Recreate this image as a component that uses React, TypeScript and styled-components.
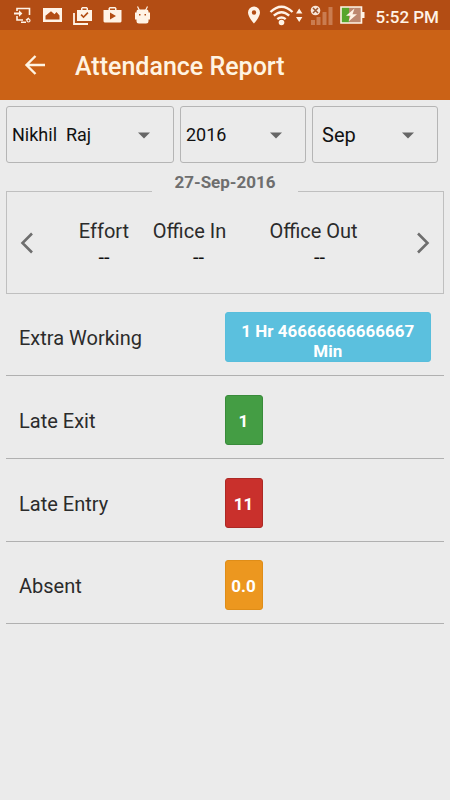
import React from "react";
import styled, { createGlobalStyle } from "styled-components";

const GlobalStyle = createGlobalStyle`
  *, *::before, *::after { box-sizing: border-box; }
  html, body, #root { min-height: 100vh; }
  body {
    margin: 0;
    background: #ebebeb;
    color: #2b2b2b;
    font-family: Roboto, "Liberation Sans", sans-serif;
    font-size: 20px;
  }
`;

const StatusBar = styled.div`
  display: flex;
  align-items: center;
  justify-content: space-between;
  height: 30px;
  padding: 0 11px 0 13px;
  background: #b34d14;
  color: #fff3e6;
`;

const StatusGroup = styled.div<{ $gap: number }>`
  display: flex;
  align-items: center;
  gap: ${(p) => p.$gap}px;
  svg { display: block; }
`;

const Clock = styled.time`
  margin-left: 5px;
  font-size: 17px;
  font-weight: 500;
  line-height: 24px;
  padding-top: 3px;
`;

const AppBar = styled.header`
  display: flex;
  align-items: center;
  gap: 26px;
  height: 70px;
  padding: 0 21px;
  background: #cb6216;
  color: #fff4e2;
`;

const IconButton = styled.button`
  display: flex;
  align-items: center;
  justify-content: center;
  padding: 0;
  border: 0;
  background: none;
  color: inherit;
  cursor: pointer;
`;

const Title = styled.h1`
  margin: 0;
  font-size: 25px;
  font-weight: 500;
  line-height: 32px;
  padding-top: 4px;
`;

const Content = styled.main`
  padding: 6px;
`;

const Filters = styled.form`
  display: grid;
  grid-template-columns: 4fr 3fr 3fr;
  gap: 6px;
  padding-right: 6px;
`;

const Picker = styled.div`
  position: relative;
  height: 57px;
  svg {
    position: absolute;
    right: 23px;
    top: 26px;
    pointer-events: none;
  }
`;

const Select = styled.select<{ $size: number; $inset: number }>`
  appearance: none;
  width: 100%;
  height: 100%;
  padding: 0 36px 0 ${(p) => p.$inset}px;
  border: 1px solid #b5b5b5;
  border-radius: 3px;
  background: transparent;
  color: #111;
  font: 400 ${(p) => p.$size}px Roboto, "Liberation Sans", sans-serif;
  white-space: pre;
`;

const DayCard = styled.section`
  position: relative;
  display: flex;
  align-items: center;
  height: 103px;
  margin-top: 28px;
  border: 1px solid #bfbfbf;
  color: #6e6e6e;
`;

const DayTitle = styled.h2`
  position: absolute;
  top: -21px;
  left: 50%;
  width: 146px;
  margin: 0 0 0 -73px;
  background: #ebebeb;
  color: #6e6e6e;
  font-size: 17px;
  font-weight: 700;
  line-height: 22px;
  text-align: center;
`;

const DayButton = styled(IconButton)`
  flex: none;
  width: 40px;
  height: 60px;
`;

const DayStats = styled.dl`
  flex: 1;
  display: grid;
  grid-template-columns: minmax(0, 114fr) minmax(0, 75fr) minmax(0, 167fr);
  margin: 0;
  padding-top: 2px;
  color: #2b2b2b;
`;

const Stat = styled.div`
  display: flex;
  flex-direction: column;
  align-items: center;
  line-height: 26px;
  white-space: nowrap;
`;

const StatName = styled.dt<{ $trail: number }>`
  padding-right: ${(p) => p.$trail}px;
`;

const StatValue = styled.dd`
  margin: 0;
  color: #111;
`;

const Summary = styled.dl`
  margin: 0;
`;

const Row = styled.div`
  display: grid;
  grid-template-columns: 1fr 1fr;
  align-items: center;
  padding: 18px 13px 13px 0;
  border-bottom: 1px solid #b0b0b0;
  & + & { padding-top: 19px; }
  &:last-child { padding-top: 18px; }
`;

const RowName = styled.dt`
  padding: 2px 0 0 13px;
  line-height: 26px;
`;

const RowValue = styled.dd`
  display: flex;
  margin: 0 0 0 6px;
`;

const Badge = styled.span<{ $fill: string; $edge: string; $top: number }>`
  display: flex;
  align-items: center;
  justify-content: center;
  min-width: 38px;
  height: 50px;
  padding: ${(p) => p.$top}px 5px 0;
  border: 1px solid ${(p) => p.$edge};
  border-radius: 3px;
  background: ${(p) => p.$fill};
  color: #fff;
  font-size: 17px;
  font-weight: 700;
  line-height: 20px;
  text-align: center;
`;

const Caret = () => (
  <svg width="14" height="7" viewBox="0 0 14 7" aria-hidden="true">
    <path d="M1 0.5h12L7 6.5z" fill="#666" />
  </svg>
);

const Chevron = ({ d }: { d: string }) => (
  <svg width="14" height="24" viewBox="0 0 14 24" aria-hidden="true">
    <path d={d} fill="none" stroke="#6e6e6e" strokeWidth="2.6" />
  </svg>
);

const StatusIcons = () => (
  <StatusGroup $gap={11} aria-hidden="true">
    <svg width="19" height="18" viewBox="0 0 19 18" fill="none" stroke="currentColor" strokeWidth="1.6">
      <path d="M4 5V2.5h12.5V9M4 10v4h6" />
      <path d="M1 7.5h6" strokeWidth="2" />
      <path d="M6 4.2L9.4 7.5 6 10.8z" fill="currentColor" stroke="none" />
      <path d="M8 16.2h5M13 14l3-2" strokeWidth="1.4" />
      <circle cx="15.5" cy="14.5" r="1.5" strokeWidth="1.2" />
    </svg>
    <svg width="19" height="16" viewBox="0 0 19 16">
      <path fillRule="evenodd" fill="currentColor" d="M0 1h19v14H0zM2.5 12.5h14V8.5L13.5 5l-2 2.2L8 4.2 2.5 8.8z" />
    </svg>
    <svg width="19" height="19" viewBox="0 0 19 19">
      <path fill="currentColor" fillRule="evenodd" d="M4 4h4V2.2L9.2 1h4.6L15 2.2V4h4v11H4zM9.5 4h4V2.5h-4zM7.5 9.3l3 3 5-5-1.2-1.2-3.8 3.8-1.8-1.8z" />
      <path d="M1 7v11h14" fill="none" stroke="currentColor" strokeWidth="1.8" />
    </svg>
    <svg width="19" height="18" viewBox="0 0 19 18">
      <path fill="currentColor" fillRule="evenodd" d="M.5 4h5V2.2L6.7 1h5.6l1.2 1.2V4h5v11.5l-1 1h-16l-1-1zM7 4h5V2.5H7zM7 6.5v7l6-3.5z" />
    </svg>
    <svg width="19" height="18" viewBox="-1 0 19 18">
      <path d="M3.5.5l2 4M13.5.5l-2 4" stroke="currentColor" strokeWidth="1.2" />
      <path fill="currentColor" fillRule="evenodd" d="M4.500 3.500h8q2 0 2 2v1H16v7h-1.500V15q0 2.500-2.500 2.500H5q-2.500 0-2.500-2.500v-1.500H1v-7h1.500v-1q0-2 2-2zM5 8v1.500h1.500V8zM10.500 8v1.500H12V8z" />
    </svg>
  </StatusGroup>
);

const SystemIcons = () => (
  <StatusGroup $gap={6}>
    <svg width="16" height="18" viewBox="0 0 16 18" aria-hidden="true">
      <path fill="currentColor" fillRule="evenodd" d="M7 0.5a6 6 0 0 0-6 6C1 11 7 17.5 7 17.5S13 11 13 6.5a6 6 0 0 0-6-6zM7 4.3a2.2 2.2 0 1 1 0 4.4 2.2 2.2 0 0 1 0-4.4z" />
    </svg>
    <svg width="34" height="22" viewBox="0 0 34 22" fill="none" stroke="currentColor" strokeWidth="2.4" aria-hidden="true">
      <path d="M1.5 8Q12.5-2.5 23.5 8M4.8 11.7q7.7-7 15.4 0M8.3 15.2q4.2-3.5 8.4 0" />
      <circle cx="12.5" cy="18.5" r="2.8" fill="currentColor" stroke="none" />
      <path d="M27 9.5l3.2-5 3.2 5zM27 13l3.2 5 3.2-5z" fill="currentColor" stroke="none" />
    </svg>
    <svg width="25" height="21" viewBox="-1 0 25 21" aria-hidden="true">
      <path d="M1 15h4v5H1zM6.5 12h4v8h-4zM12.5 7h4v13h-4zM18.5 2h4v18h-4z" fill="#ca7c50" />
      <circle cx="5.5" cy="5.5" r="4.8" fill="#f8e5d8" />
      <path d="M3 3l5 5M8 3L3 8" stroke="#9b552f" strokeWidth="1.5" />
    </svg>
    <svg width="25" height="18" viewBox="0 0 25 18" aria-hidden="true">
      <path d="M1 1h20.5v16H1z" fill="#bd8870" />
      <path d="M1 1h8v16H1z" fill="#58a52b" />
      <path d="M1 1h20.5v16H1z" fill="none" stroke="#fff3e6" strokeWidth="1.6" />
      <path d="M22 6h2.5v6H22z" fill="#fff3e6" />
      <path d="M14.5 2.5L6 9.8h4.5L8.5 15.5l8.5-7.3h-4.5z" fill="#fff3e6" />
    </svg>
    <Clock>5:52 PM</Clock>
  </StatusGroup>
);

const stats = [
  { name: "Effort", value: "--", trail: 0 },
  { name: "Office In", value: "--", trail: 18 },
  { name: "Office Out", value: "--", trail: 12 },
];

const rows = [
  { name: "Extra Working", value: "1 Hr 46666666666667 Min", top: 8, fill: "#5bc0de", edge: "#58bedc" },
  { name: "Late Exit", value: "1", top: 2, fill: "#449d44", edge: "#398b3b" },
  { name: "Late Entry", value: "11", top: 2, fill: "#c9302c", edge: "#ac2925" },
  { name: "Absent", value: "0.0", top: 2, fill: "#ec971f", edge: "#df8d18" },
];

const pickers = [
  { label: "Employee", value: "Nikhil\u00a0 Raj", size: 18, inset: 5 },
  { label: "Year", value: "2016", size: 18, inset: 5 },
  { label: "Month", value: "Sep", size: 20, inset: 9 },
];

export default function App() {
  return (
    <>
      <GlobalStyle />
      <StatusBar>
        <StatusIcons />
        <SystemIcons />
      </StatusBar>
      <AppBar>
        <IconButton aria-label="Back">
          <svg width="28" height="28" viewBox="0 0 28 28" fill="none" stroke="currentColor" strokeWidth="2.4" aria-hidden="true">
            <path d="M24 14H6M14.5 5L5.5 14l9 9" />
          </svg>
        </IconButton>
        <Title>Attendance Report</Title>
      </AppBar>
      <Content>
        <Filters>
          {pickers.map((p) => (
            <Picker key={p.label}>
              <Select aria-label={p.label} $size={p.size} $inset={p.inset}>
                <option>{p.value}</option>
              </Select>
              <Caret />
            </Picker>
          ))}
        </Filters>
        <DayCard>
          <DayTitle>27-Sep-2016</DayTitle>
          <DayButton aria-label="Previous day">
            <Chevron d="M12 2.5L2.5 12l9.5 9.5" />
          </DayButton>
          <DayStats>
            {stats.map((s) => (
              <Stat key={s.name}>
                <StatName $trail={s.trail}>{s.name}</StatName>
                <StatValue>{s.value}</StatValue>
              </Stat>
            ))}
          </DayStats>
          <DayButton aria-label="Next day">
            <Chevron d="M2 2.5l9.5 9.5L2 21.5" />
          </DayButton>
        </DayCard>
        <Summary>
          {rows.map((r) => (
            <Row key={r.name}>
              <RowName>{r.name}</RowName>
              <RowValue>
                <Badge $fill={r.fill} $edge={r.edge} $top={r.top}>{r.value}</Badge>
              </RowValue>
            </Row>
          ))}
        </Summary>
      </Content>
    </>
  );
}
